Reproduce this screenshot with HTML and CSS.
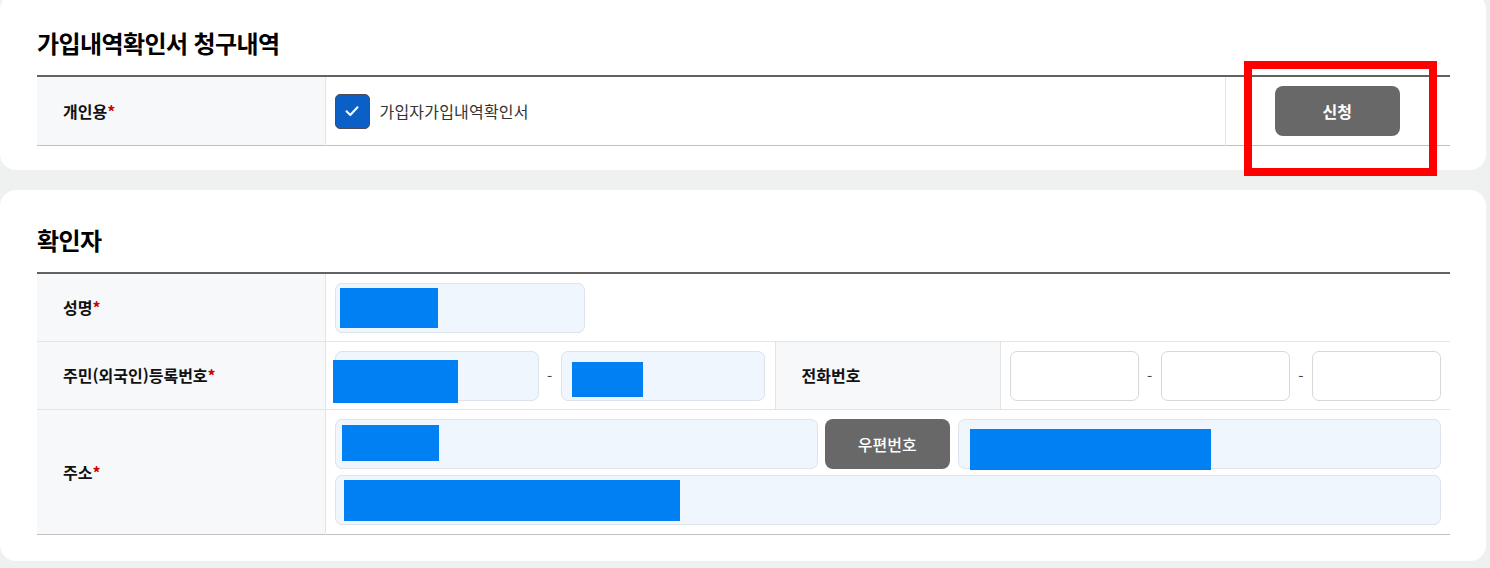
FILE: index.html
```html
<!DOCTYPE html>
<html lang="ko">
<head>
<meta charset="utf-8">
<title>가입내역확인서 청구내역</title>
<link rel="stylesheet" href="styles.css">
</head>
<body>
<div class="page">
  <section class="panel panel--first">
    <h2 class="panel-title">가입내역확인서 청구내역</h2>
    <table class="form-table form-table--single">
      <colgroup><col class="c-th"><col class="c-main"><col class="c-btn"></colgroup>
      <tr>
        <th>개인용<span class="req">*</span></th>
        <td>
          <label class="check">
            <span class="check-box">
              <svg width="18" height="18" viewBox="0 0 18 18"><path d="M3.5 9.2 L7.3 13 L14.5 5.2" fill="none" stroke="#fff" stroke-width="2" stroke-linecap="round" stroke-linejoin="round"/></svg>
            </span>
            <span class="check-text">가입자가입내역확인서</span>
          </label>
        </td>
        <td class="cell-center"><button class="btn btn--apply">신청</button></td>
      </tr>
    </table>
    <div class="highlight"></div>
  </section>

  <section class="panel panel--second">
    <h2 class="panel-title">확인자</h2>
    <table class="form-table">
      <colgroup><col class="c-th"><col class="c-half"><col class="c-th2"><col class="c-half"></colgroup>
      <tr>
        <th>성명<span class="req">*</span></th>
        <td colspan="3">
          <div class="field field--name"><span class="mask mask--name"></span></div>
        </td>
      </tr>
      <tr>
        <th>주민(외국인)등록번호<span class="req">*</span></th>
        <td>
          <div class="split">
            <div class="field field--grow"><span class="mask mask--rrn1"></span></div>
            <span class="dash">-</span>
            <div class="field field--grow"><span class="mask mask--rrn2"></span></div>
          </div>
        </td>
        <th class="th-mid">전화번호</th>
        <td class="td-phone">
          <div class="split">
            <div class="field field--white field--grow"></div>
            <span class="dash">-</span>
            <div class="field field--white field--grow"></div>
            <span class="dash">-</span>
            <div class="field field--white field--grow"></div>
          </div>
        </td>
      </tr>
      <tr>
        <th>주소<span class="req">*</span></th>
        <td colspan="3" class="td-addr">
          <div class="addr-row">
            <div class="field field--grow"><span class="mask mask--zip"></span></div>
            <button class="btn btn--zip">우편번호</button>
            <div class="field field--grow"><span class="mask mask--addr1"></span></div>
          </div>
          <div class="field field--full"><span class="mask mask--addr2"></span></div>
        </td>
      </tr>
    </table>
  </section>
</div>
</body>
</html>
```

FILE: styles.css
```css
* { box-sizing: border-box; }

html, body {
  margin: 0;
  padding: 0;
  background: #eff0f0;
  font-family: "Noto Sans CJK KR", "Noto Sans", sans-serif;
  color: #111;
}

.page {
  width: 1486px;
  display: flex;
  flex-direction: column;
  gap: 20px;
}

.panel {
  position: relative;
  background: #fff;
  border-radius: 16px;
  padding: 33px 36px 25px 37px;
}

.panel--first {
  margin-top: -7px;
  padding-bottom: 24px;
}

.panel--second {
  padding-bottom: 26px;
}

.panel-title {
  margin: 0 0 15px;
  font-size: 24px;
  line-height: 34px;
  font-weight: 700;
  letter-spacing: -0.6px;
  color: #000;
}

.form-table {
  width: 100%;
  border-collapse: collapse;
  table-layout: fixed;
  border-top: 2px solid #626262;
  border-bottom: 1px solid #bfbfc6;
}

.c-th { width: 288px; }
.c-main { width: 900px; }
.c-btn { width: 225px; }
.c-half { width: 450px; }
.c-th2 { width: 225px; }

.form-table tr + tr th,
.form-table tr + tr td {
  border-top: 1px solid #e2e4e8;
}

.form-table th {
  background: #f7f8fa;
  text-align: left;
  font-size: 16px;
  font-weight: 700;
  padding: 0 0 0 26px;
  height: 68px;
  color: #111;
  letter-spacing: 0;
  border-right: 1px solid #e2e4e8;
}

.form-table td {
  padding: 9px 10px 8px 9px;
  height: 68px;
  vertical-align: middle;
}

.form-table--single th,
.form-table--single td {
  height: 69px;
}

.form-table td + td { border-left: 1px solid #e2e4e8; }
.form-table .th-mid { border-left: 1px solid #e2e4e8; }

.req { color: #d30000; }

.check {
  display: flex;
  align-items: center;
  gap: 10px;
}

.check-box {
  width: 35px;
  height: 35px;
  border-radius: 5px;
  background: #0b60c8;
  border: 1px solid #4b4f55;
  display: flex;
  align-items: center;
  justify-content: center;
}

.check-text {
  font-size: 16px;
  color: #333;
  letter-spacing: 0.2px;
}

.cell-center { text-align: center; }

.btn {
  border: 0;
  background: #686868;
  color: #fff;
  font-family: inherit;
  font-size: 16px;
  font-weight: 700;
  border-radius: 8px;
  height: 50px;
  width: 125px;
  padding: 0;
}

.btn--zip { font-weight: 500; flex: none; }

.highlight {
  position: absolute;
  left: 1244px;
  top: 68px;
  width: 193px;
  height: 115px;
  border: 8px solid #ff0000;
}

.field {
  position: relative;
  height: 50px;
  background: #eff6fe;
  border: 1px solid #dde3ea;
  border-radius: 7px;
}

.field--white {
  background: #fff;
  border-color: #d8d8d8;
}

.field--name { width: 250px; }
.field--grow { flex: 1; }
.field--full { width: 100%; }

.split {
  display: flex;
  align-items: center;
}

.dash {
  width: 22px;
  text-align: center;
  font-size: 15px;
  color: #444;
}

.td-phone { padding-right: 9px !important; }

.td-addr { padding: 9px 9px 9px 9px !important; }

.addr-row {
  display: flex;
  gap: 7px;
  margin-bottom: 6px;
}

.addr-row .btn--zip { margin-right: 1px; }

.mask {
  position: absolute;
  background: #0080f3;
}

.mask--name { left: 4px; top: 4px; width: 98px; height: 40px; }
.mask--rrn1 { left: -3px; top: 8px; width: 125px; height: 43px; }
.mask--rrn2 { left: 10px; top: 10px; width: 71px; height: 35px; }
.mask--zip { left: 6px; top: 5px; width: 97px; height: 36px; }
.mask--addr1 { left: 11px; top: 9px; width: 241px; height: 41px; }
.mask--addr2 { left: 8px; top: 4px; width: 336px; height: 41px; }
```
